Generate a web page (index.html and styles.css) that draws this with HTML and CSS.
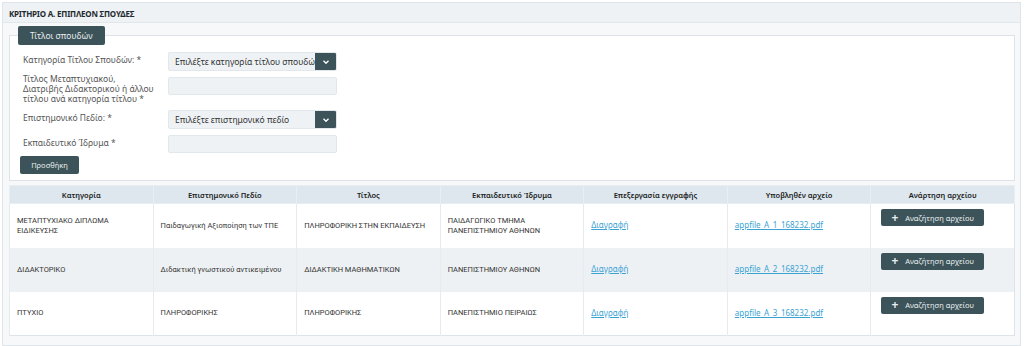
FILE: index.html
```html
<!DOCTYPE html>
<html lang="el">
<head>
    <meta charset="UTF-8">
    <title>Κριτήριο Α</title>
    <link rel="stylesheet" href="styles.css">
</head>
<body>
    <div class="panel">
        <div class="panel-heading">ΚΡΙΤΗΡΙΟ Α. ΕΠΙΠΛΕΟΝ ΣΠΟΥΔΕΣ</div>
        <div class="panel-body">
            <fieldset class="box">
                <legend class="legend">Τίτλοι σπουδών</legend>
                <div class="form-row first">
                    <label>Κατηγορία Τίτλου Σπουδών: *</label>
                    <div class="select">
                        <span class="select-text">Επιλέξτε κατηγορία τίτλου σπουδών</span>
                        <span class="select-btn">
                            <svg width="8" height="8" viewBox="0 0 8 8"><path d="M1.5 2.8 L4 5.2 L6.5 2.8" fill="none" stroke="#fff" stroke-width="1.4"/></svg>
                        </span>
                    </div>
                </div>
                <div class="form-row tall">
                    <label>Τίτλος Μεταπτυχιακού,<br>Διατριβής Διδακτορικού ή άλλου<br>τίτλου ανά κατηγορία τίτλου *</label>
                    <div class="input"></div>
                </div>
                <div class="form-row">
                    <label>Επιστημονικό Πεδίο: *</label>
                    <div class="select">
                        <span class="select-text">Επιλέξτε επιστημονικό πεδίο</span>
                        <span class="select-btn">
                            <svg width="8" height="8" viewBox="0 0 8 8"><path d="M1.5 2.8 L4 5.2 L6.5 2.8" fill="none" stroke="#fff" stroke-width="1.4"/></svg>
                        </span>
                    </div>
                </div>
                <div class="form-row">
                    <label>Εκπαιδευτικό Ίδρυμα *</label>
                    <div class="input"></div>
                </div>
                <button class="btn btn-add">Προσθήκη</button>
            </fieldset>

            <table class="grid">
                <thead>
                    <tr>
                        <th>Κατηγορία</th>
                        <th>Επιστημονικό Πεδίο</th>
                        <th>Τίτλος</th>
                        <th>Εκπαιδευτικό Ίδρυμα</th>
                        <th>Επεξεργασία εγγραφής</th>
                        <th>Υποβληθέν αρχείο</th>
                        <th>Ανάρτηση αρχείου</th>
                    </tr>
                </thead>
                <tbody>
                    <tr>
                        <td>ΜΕΤΑΠΤΥΧΙΑΚΟ ΔΙΠΛΩΜΑ<br>ΕΙΔΙΚΕΥΣΗΣ</td>
                        <td>Παιδαγωγική Αξιοποίηση των ΤΠΕ</td>
                        <td>ΠΛΗΡΟΦΟΡΙΚΗ ΣΤΗΝ ΕΚΠΑΙΔΕΥΣΗ</td>
                        <td>ΠΑΙΔΑΓΩΓΙΚΟ ΤΜΗΜΑ<br>ΠΑΝΕΠΙΣΤΗΜΙΟΥ ΑΘΗΝΩΝ</td>
                        <td><a href="#">Διαγραφή</a></td>
                        <td><a href="#">appfile_A_1_168232.pdf</a></td>
                        <td class="upload"><button class="btn btn-file"><span class="plus">+</span>Αναζήτηση αρχείου</button></td>
                    </tr>
                    <tr>
                        <td>ΔΙΔΑΚΤΟΡΙΚΟ</td>
                        <td>Διδακτική γνωστικού αντικειμένου</td>
                        <td>ΔΙΔΑΚΤΙΚΗ ΜΑΘΗΜΑΤΙΚΩΝ</td>
                        <td>ΠΑΝΕΠΙΣΤΗΜΙΟΥ ΑΘΗΝΩΝ</td>
                        <td><a href="#">Διαγραφή</a></td>
                        <td><a href="#">appfile_A_2_168232.pdf</a></td>
                        <td class="upload"><button class="btn btn-file"><span class="plus">+</span>Αναζήτηση αρχείου</button></td>
                    </tr>
                    <tr>
                        <td>ΠΤΥΧΙΟ</td>
                        <td>ΠΛΗΡΟΦΟΡΙΚΗΣ</td>
                        <td>ΠΛΗΡΟΦΟΡΙΚΗΣ</td>
                        <td>ΠΑΝΕΠΙΣΤΗΜΙΟ ΠΕΙΡΑΙΩΣ</td>
                        <td><a href="#">Διαγραφή</a></td>
                        <td><a href="#">appfile_A_3_168232.pdf</a></td>
                        <td class="upload"><button class="btn btn-file"><span class="plus">+</span>Αναζήτηση αρχείου</button></td>
                    </tr>
                </tbody>
            </table>
        </div>
    </div>
</body>
</html>
```

FILE: styles.css
```css
* {
    box-sizing: border-box;
    margin: 0;
    padding: 0;
    font-family: 'Noto Sans', 'DejaVu Sans', sans-serif;
}

body {
    background-color: #fff;
    color: #444;
    padding: 2px 3px 0 2px;
}

.panel {
    border: 1px solid #dfe5ea;
    background-color: #f6f8fa;
}

.panel-heading {
    height: 20px;
    padding: 5px 6px 0 6px;
    font-size: 8px;
    font-weight: bold;
    color: #1f2a30;
    background-color: #eef2f5;
    border-bottom: 1px solid #e2e7eb;
    letter-spacing: -0.2px;
}

.panel-body {
    padding: 3px 5px 9px 6px;
}

.box {
    border: 1px solid #dde3e8;
    background-color: #fff;
    padding: 0 0 6px 13px;
    margin-bottom: 4px;
}

.legend {
    margin-left: -5px;
    padding: 0 12px;
    height: 19px;
    line-height: 19px;
    font-size: 8.5px;
    color: #e9eef0;
    background-color: #3c5359;
    border-radius: 2px;
}

.form-row {
    display: flex;
    align-items: flex-start;
    height: 20px;
    margin-top: 5px;
}

.form-row.first {
    margin-top: 7px;
}

.form-row.tall {
    height: 30px;
    margin-top: 2px;
    margin-bottom: 6px;
}

.form-row label {
    width: 145px;
    font-size: 8.5px;
    line-height: 10px;
    color: #555;
    padding-top: 3px;
}

.form-row.tall label {
    padding-top: 0;
}

.input, .select {
    width: 169px;
    height: 18px;
    background-color: #eef2f5;
    border: 1px solid #e2e7eb;
    border-radius: 2px;
}

.form-row.tall .input {
    margin-top: 3px;
}

.select {
    display: flex;
    align-items: center;
    justify-content: space-between;
    overflow: hidden;
    height: 19px;
}

.select-text {
    font-size: 8.5px;
    color: #333;
    padding-left: 6px;
    white-space: nowrap;
    overflow: hidden;
}

.select-btn {
    flex: none;
    width: 21px;
    height: 19px;
    background-color: #3c5359;
    display: flex;
    align-items: center;
    justify-content: center;
    border-radius: 0 2px 2px 0;
}

.btn {
    border: none;
    background-color: #3c5359;
    color: #e9eef0;
    border-radius: 2px;
    cursor: pointer;
}

.btn-add {
    display: block;
    margin: 1px 0 0 -3px;
    width: 59px;
    height: 18px;
    font-size: 7.5px;
}

.grid {
    width: 100%;
    border-collapse: collapse;
    table-layout: fixed;
    border: 1px solid #dde3e8;
    background-color: #fff;
}

.grid th {
    height: 18px;
    font-size: 7.5px;
    font-weight: 600;
    color: #222;
    background-color: #dde7ed;
    border: 1px solid #e8eef2;
    text-align: center;
}

.grid td {
    height: 44px;
    font-family: Roboto, 'Noto Sans', sans-serif;
    font-size: 7.5px;
    line-height: 10px;
    color: #333;
    padding: 0 4px 0 7px;
    border-left: 1px solid #e6ebef;
    vertical-align: middle;
}

.grid tbody tr:nth-child(2) td {
    background-color: #eef1f4;
}

.grid a {
    color: #3ba3d4;
    font-size: 8px;
}

.grid td.upload {
    vertical-align: top;
    padding-top: 5px;
    padding-left: 10px;
}

.btn-file {
    width: 103px;
    height: 17px;
    font-size: 7.5px;
    display: flex;
    align-items: center;
    padding-left: 10px;
}

.plus {
    font-size: 12px;
    font-weight: bold;
    margin-right: 7px;
    line-height: 10px;
}
```
